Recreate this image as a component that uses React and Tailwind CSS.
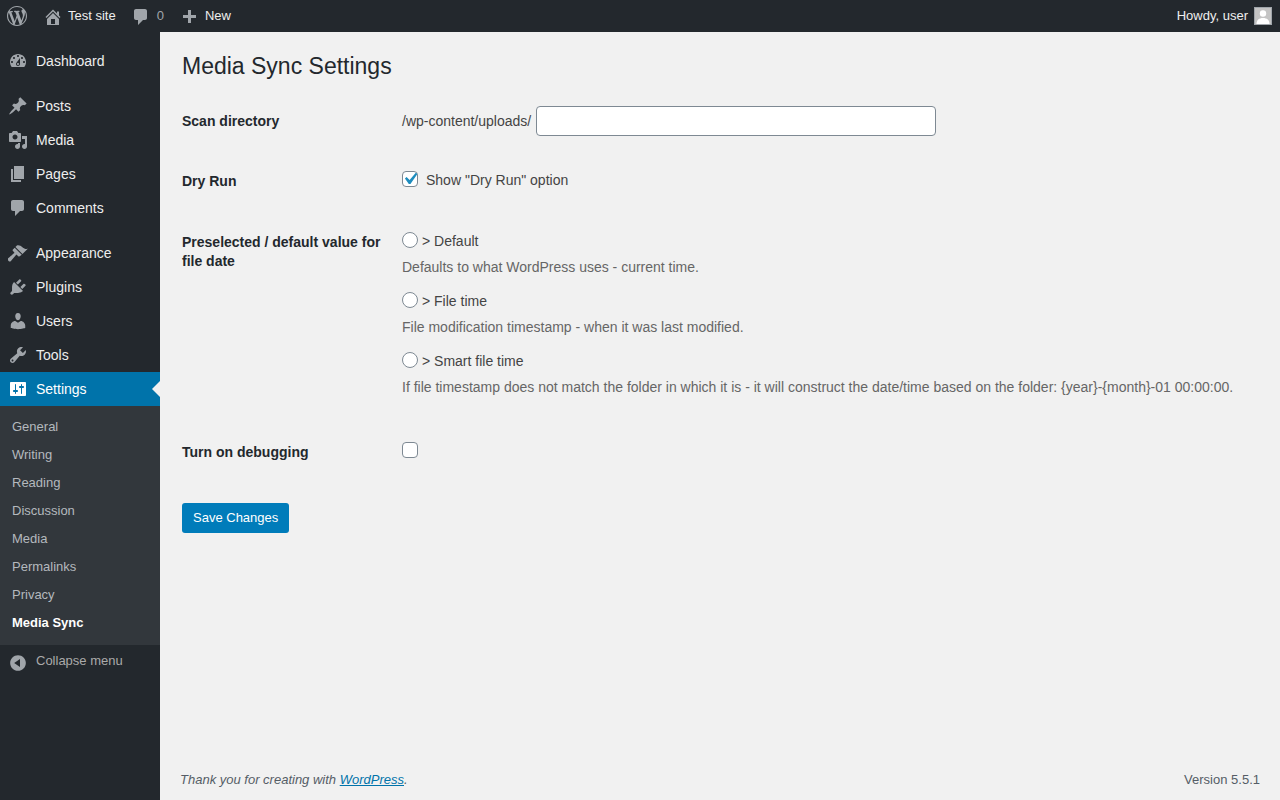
const icons = {
  wordpress: 'M20 10c0-5.51-4.49-10-10-10C4.48 0 0 4.49 0 10c0 5.52 4.48 10 10 10 5.51 0 10-4.48 10-10zM7.78 15.37L4.37 6.22c.55-.02 1.17-.08 1.17-.08.5-.06.44-1.13-.06-1.11 0 0-1.45.11-2.37.11-.18 0-.37 0-.58-.01C4.12 2.69 6.87 1.11 10 1.11c2.33 0 4.45.87 6.05 2.34-.68-.11-1.65.39-1.65 1.58 0 .74.45 1.36.9 2.1.35.61.55 1.36.55 2.46 0 1.49-1.4 5-1.4 5l-3.03-8.37c.54-.02.82-.17.82-.17.5-.05.44-1.25-.06-1.22 0 0-1.44.12-2.38.12-.87 0-2.33-.12-2.33-.12-.5-.03-.56 1.2-.06 1.22l.92.08 1.26 3.41zM17.41 10c.24-.64.74-1.87.43-4.25.7 1.29 1.05 2.71 1.05 4.25 0 3.29-1.73 6.24-4.4 7.78.97-2.59 1.94-5.2 2.92-7.78zM6.1 18.09C3.12 16.65 1.11 13.53 1.11 10c0-1.3.23-2.48.72-3.59C3.25 10.3 4.67 14.2 6.1 18.09zm4.03-6.63l2.58 6.98c-.86.29-1.76.45-2.71.45-.79 0-1.57-.11-2.29-.33.81-2.38 1.62-4.74 2.42-7.1z',
  home: 'M16 8.5l1.53 1.53-1.06 1.06L10 4.62l-6.47 6.47-1.06-1.06L10 2.5l4 4v-2h2v4zm-6-2.46l6 5.99V18H4v-5.97zM12 17v-5H8v5h4z',
  comment: 'M5 2h9c1.1 0 2 .9 2 2v7c0 1.1-.9 2-2 2h-2l-5 5v-5H5c-1.1 0-2-.9-2-2V4c0-1.1.9-2 2-2z',
  plus: 'M17 7v3h-5v5H9v-5H4V7h5V2h3v5h5z',
  dashboard: 'M3.76 16h12.48c1.1-1.37 1.76-3.11 1.76-5 0-4.42-3.58-8-8-8s-8 3.58-8 8c0 1.89.66 3.63 1.76 5zM10 4c.55 0 1 .45 1 1s-.45 1-1 1-1-.45-1-1 .45-1 1-1zM6 6c.55 0 1 .45 1 1s-.45 1-1 1-1-.45-1-1 .45-1 1-1zm8 0c.55 0 1 .45 1 1s-.45 1-1 1-1-.45-1-1 .45-1 1-1zm-5.37 5.55L12 7v6c0 1.1-.9 2-2 2s-2-.9-2-2c0-.57.24-1.08.63-1.45zM4 10c.55 0 1 .45 1 1s-.45 1-1 1-1-.45-1-1 .45-1 1-1zm12 0c.55 0 1 .45 1 1s-.45 1-1 1-1-.45-1-1 .45-1 1-1zm-5 3c0-.55-.45-1-1-1s-1 .45-1 1 .45 1 1 1 1-.45 1-1z',
  post: 'M10.44 3.02l1.82-1.82 6.36 6.35-1.83 1.82c-1.05-.68-2.48-.57-3.41.36l-.75.75c-.92.93-1.04 2.35-.35 3.41l-1.83 1.82-2.41-2.41-2.8 2.79c-.42.42-3.38 2.71-3.8 2.29s1.86-3.39 2.28-3.81l2.79-2.79L4.1 9.36l1.83-1.82c1.05.69 2.48.57 3.4-.36l.75-.75c.93-.92 1.05-2.35.36-3.41z',
  media: 'M13 11V4c0-.55-.45-1-1-1h-1.67L9 1H5L3.67 3H2c-.55 0-1 .45-1 1v7c0 .55.45 1 1 1h10c.55 0 1-.45 1-1zM7 4.5c1.38 0 2.5 1.12 2.5 2.5S8.38 9.5 7 9.5 4.5 8.38 4.5 7 5.62 4.5 7 4.5zM14 6h5v10.5c0 1.38-1.12 2.5-2.5 2.5S14 17.88 14 16.5s1.12-2.5 2.5-2.5c.17 0 .34.02.5.05V9h-3V6zm-4 8.05V13h2v3.5c0 1.38-1.12 2.5-2.5 2.5S7 17.88 7 16.5 8.12 14 9.5 14c.17 0 .34.02.5.05z',
  page: 'M6 15V2h10v13H6zm-1 1h8v2H3V5h2v11z',
  appearance: 'M14.48 11.06L7.41 3.99l1.5-1.5c.5-.56 2.3-.47 3.51.32 1.21.8 1.43 1.28 2.91 2.1 1.18.64 2.45 1.26 4.45.85zm-.71.71L6.7 4.7 4.93 6.47c-.39.39-.39 1.02 0 1.41l1.06 1.06c.39.39.39 1.03 0 1.42-.6.6-6.04 5.05-6.04 5.05-.51.51-.51 1.37 0 1.88l.89.89c.51.51 1.37.51 1.88 0 0 0 4.45-5.44 5.05-6.04.39-.39 1.03-.39 1.42 0l1.06 1.06c.39.39 1.02.39 1.41 0z',
  plugins: 'M13.11 4.36L9.87 7.6 8 5.73l3.24-3.24c.35-.34 1.05-.2 1.56.32.52.51.66 1.21.31 1.55zm-8 1.77l.91-1.12 9.01 9.01-1.19.84c-.71.71-2.63 1.16-3.82 1.16H6.14L4.9 17.26c-.59.59-1.54.59-2.12 0-.59-.58-.59-1.53 0-2.12l1.24-1.24v-3.88c0-1.13.4-3.19 1.09-3.89zm7.26 3.97l3.24-3.24c.34-.35 1.04-.21 1.55.31.52.51.66 1.21.31 1.55l-3.24 3.25z',
  users: 'M10 9.25c-2.27 0-2.73-3.44-2.73-3.44C7 4.02 7.82 2 9.97 2c2.16 0 2.98 2.02 2.71 3.81 0 0-.41 3.44-2.68 3.44zm0 2.57L12.72 10c2.39 0 4.52 2.33 4.52 4.53v2.49s-3.65 1.13-7.24 1.13c-3.65 0-7.24-1.13-7.24-1.13v-2.49c0-2.25 1.94-4.48 4.47-4.48z',
  tools: 'M16.68 9.77c-1.34 1.34-3.3 1.67-4.95.99l-5.41 6.52c-.99.99-2.59.99-3.58 0s-.99-2.59 0-3.57l6.52-5.42c-.68-1.65-.35-3.61.99-4.95 1.28-1.28 3.12-1.62 4.72-1.06l-2.89 2.89 2.82 2.82 2.86-2.87c.53 1.58.18 3.39-1.08 4.65zM3.81 16.21c.4.39 1.04.39 1.43 0 .4-.4.4-1.04 0-1.43-.39-.4-1.03-.4-1.43 0-.39.39-.39 1.03 0 1.43z',
  settings: 'M18 16V4c0-.55-.45-1-1-1H3c-.55 0-1 .45-1 1v12c0 .55.45 1 1 1h14c.55 0 1-.45 1-1zM8 11h1c.55 0 1 .45 1 1s-.45 1-1 1H8v1.5c0 .28-.22.5-.5.5s-.5-.22-.5-.5V13H6c-.55 0-1-.45-1-1s.45-1 1-1h1V5.5c0-.28.22-.5.5-.5s.5.22.5.5V11zm5-2h-1c-.55 0-1-.45-1-1s.45-1 1-1h1V5.5c0-.28.22-.5.5-.5s.5.22.5.5V7h1c.55 0 1 .45 1 1s-.45 1-1 1h-1v5.5c0 .28-.22.5-.5.5s-.5-.22-.5-.5V9z',
  collapse: 'M10 2.16c4.33 0 7.84 3.51 7.84 7.84s-3.51 7.84-7.84 7.84S2.16 14.33 2.16 10 5.71 2.16 10 2.16zm2 11.72V6.12L6.18 9.97z',
}

const Icon = ({ name, className = '' }) => (
  <svg viewBox="0 0 20 20" className={`shrink-0 fill-current ${className}`}>
    <path d={icons[name]} />
  </svg>
)

const subMenu = ['General', 'Writing', 'Reading', 'Discussion', 'Media', 'Permalinks', 'Privacy']

const MenuItem = ({ icon, label, active }) => (
  <div className={`relative flex h-[34px] items-center text-[14px] ${active ? 'bg-[#0073aa] text-white' : 'text-[#eeeeee]'}`}>
    <Icon name={icon} className={`ml-2 h-5 w-5 ${active ? 'text-white' : 'text-[#a0a5aa]'}`} />
    <span className="ml-2">{label}</span>
    {active && <span className="absolute right-0 top-[9px] h-0 w-0 border-y-[8px] border-r-[8px] border-y-transparent border-r-[#f1f1f1]" />}
  </div>
)

const Row = ({ label, className = '', children }) => (
  <div className={`flex ${className}`}>
    <div className="w-[220px] shrink-0 pt-[6px] pr-5 text-[14px] leading-[19px] font-semibold text-[#23282d]">{label}</div>
    <div className="min-w-0 flex-1">{children}</div>
  </div>
)

const Radio = ({ label, desc }) => (
  <div>
    <label className="flex h-[18px] items-start text-[14px] leading-[18px] text-[#444444]">
      <input type="radio" name="filedate" className="h-4 w-4 shrink-0 appearance-none rounded-full border border-[#7e8993] bg-white" />
      <span className="ml-1">{label}</span>
    </label>
    <p className="mt-[7px] text-[14px] leading-[21px] text-[#666666]">{desc}</p>
  </div>
)

export default function App() {
  return (
    <div className="flex h-screen flex-col overflow-hidden bg-[#f1f1f1] font-['Liberation_Sans',Arial,sans-serif]">
      <header className="flex h-8 shrink-0 items-center bg-[#23282d] text-[13px] text-[#eeeeee]">
        <Icon name="wordpress" className="ml-[7px] h-5 w-5 text-[#a0a5aa]" />
        <Icon name="home" className="mt-[2px] ml-4 h-5 w-5 text-[#a0a5aa]" />
        <span className="ml-[5px]">Test site</span>
        <Icon name="comment" className="mt-[2px] ml-[15px] h-5 w-5 text-[#a0a5aa]" />
        <span className="ml-[6px] text-[#a0a5aa]">0</span>
        <Icon name="plus" className="mt-1 ml-[15px] h-5 w-5 text-[#a0a5aa]" />
        <span className="ml-[6px]">New</span>
        <span className="ml-auto">Howdy, user</span>
        <span className="mr-2 ml-[6px] flex h-[18px] w-[18px] items-end justify-center overflow-hidden border border-[#a0a5aa] bg-[#c4c4c4]">
          <svg viewBox="0 0 16 16" className="h-4 w-4 fill-white">
            <circle cx="8" cy="5.5" r="3.2" />
            <path d="M1.5 16c0-4 2.5-6 6.5-6s6.5 2 6.5 6z" />
          </svg>
        </span>
      </header>

      <div className="flex min-h-0 flex-1">
        <aside className="w-40 shrink-0 bg-[#23282d] pt-3">
          <MenuItem icon="dashboard" label="Dashboard" />
          <div className="mt-[11px]">
            <MenuItem icon="post" label="Posts" />
            <MenuItem icon="media" label="Media" />
            <MenuItem icon="page" label="Pages" />
            <MenuItem icon="comment" label="Comments" />
          </div>
          <div className="mt-[11px]">
            <MenuItem icon="appearance" label="Appearance" />
            <MenuItem icon="plugins" label="Plugins" />
            <MenuItem icon="users" label="Users" />
            <MenuItem icon="tools" label="Tools" />
            <MenuItem icon="settings" label="Settings" active />
          </div>
          <ul className="bg-[#32373c] pt-[7px] pb-[8px] text-[13px] text-[#b4b9be]">
            {subMenu.map(s => (
              <li key={s} className="flex h-7 items-center pl-3">{s}</li>
            ))}
            <li className="flex h-7 items-center pl-3 font-semibold text-white">Media Sync</li>
          </ul>
          <div className="flex h-[34px] items-start pt-[8px] text-[13px] leading-[15px] text-[#aaaaaa]">
            <Icon name="collapse" className="ml-2 h-5 w-5 text-[#a0a5aa]" />
            <span className="ml-2">Collapse menu</span>
          </div>
        </aside>

        <main className="flex min-w-0 flex-1 flex-col">
          <div className="flex-1 pl-[22px]">
            <h1 className="mt-5 text-[23px] leading-[29px] font-normal text-[#23282d]">Media Sync Settings</h1>

            <Row label="Scan directory" className="mt-[25px] h-[60px]">
              <div className="flex items-center text-[14px] text-[#444444]">
                <span>/wp-content/uploads/</span>
                <input type="text" className="ml-[5px] h-[30px] w-[400px] rounded-[4px] border border-[#7e8993] bg-white" />
              </div>
            </Row>

            <Row label="Dry Run" className="h-[61px]">
              <label className="flex items-start pt-[5px] text-[14px] leading-[18px] text-[#444444]">
                <span className="relative h-4 w-4 shrink-0 rounded-[4px] border border-[#7e8993] bg-white">
                  <svg viewBox="0 0 20 20" className="absolute -top-[5px] -left-[5px] h-6 w-6 fill-[#1e8cbe]">
                    <path d="M14.83 4.89l1.34.94-5.81 8.38H9.02L5.78 9.67l1.34-1.25 2.57 2.4z" />
                  </svg>
                </span>
                <span className="ml-2">Show "Dry Run" option</span>
              </label>
            </Row>

            <Row label="Preselected / default value for file date" className="h-[210px]">
              <div className="flex flex-col gap-[14px] pt-[5px]">
                <Radio label="> Default" desc="Defaults to what WordPress uses - current time." />
                <Radio label="> File time" desc="File modification timestamp - when it was last modified." />
                <Radio label="> Smart file time" desc="If file timestamp does not match the folder in which it is - it will construct the date/time based on the folder: {year}-{month}-01 00:00:00." />
              </div>
            </Row>

            <Row label="Turn on debugging" className="h-[66px]">
              <input type="checkbox" className="mt-[5px] block h-4 w-4 appearance-none rounded-[4px] border border-[#7e8993] bg-white" />
            </Row>

            <button className="h-[30px] rounded-[3px] bg-[#007cba] px-[11px] text-[13px] text-white">Save Changes</button>
          </div>

          <footer className="flex h-7 shrink-0 items-start justify-between px-5 text-[13px] leading-[15px] text-[#555d66]">
            <p className="italic">Thank you for creating with <a href="#" className="text-[#0073aa] underline">WordPress</a>.</p>
            <p>Version 5.5.1</p>
          </footer>
        </main>
      </div>
    </div>
  )
}
